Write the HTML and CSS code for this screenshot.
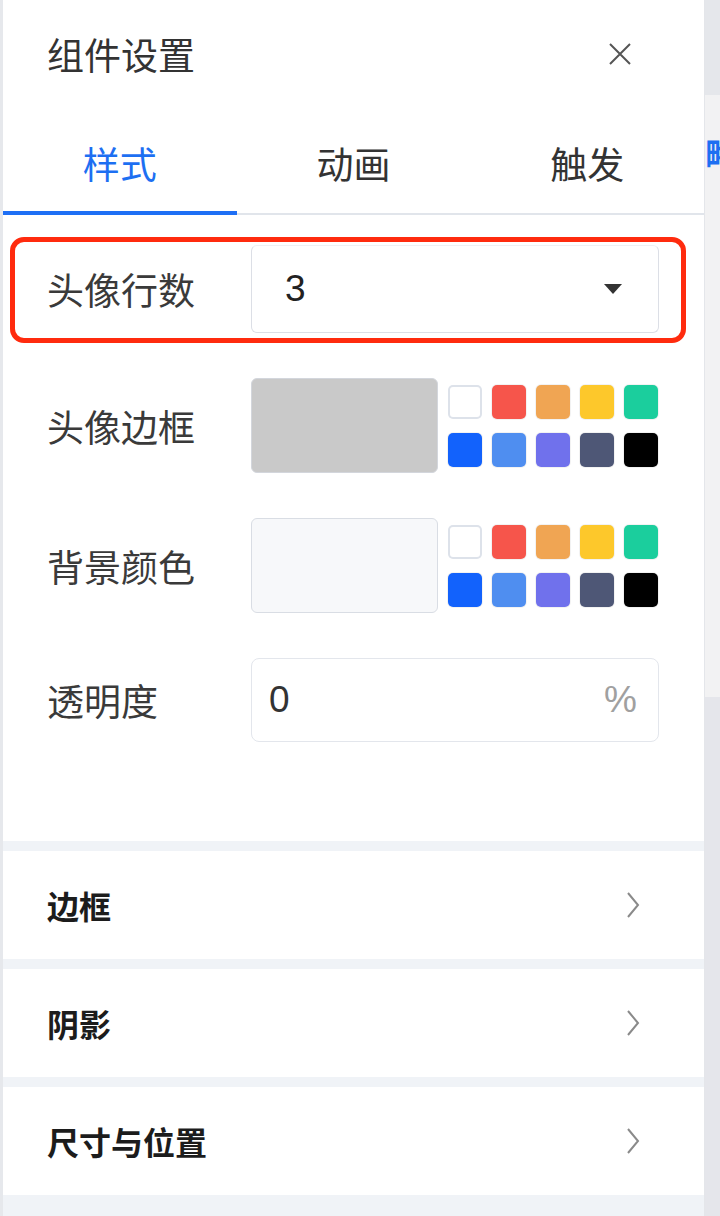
FILE: index.html
```html
<!DOCTYPE html>
<html lang="zh-CN">
<head>
    <meta charset="UTF-8">
    <meta name="viewport" content="width=device-width, initial-scale=1.0">
    <title>组件设置</title>
    <link rel="stylesheet" href="styles.css">
</head>
<body>
    <div class="edge-left"></div>

    <div class="panel">
        <div class="panel-header">
            <span class="panel-title">组件设置</span>
            <svg class="close-icon" width="24" height="24" viewBox="0 0 24 24">
                <path d="M2 2 L22 22 M22 2 L2 22" stroke="#555" stroke-width="2" fill="none"/>
            </svg>
        </div>

        <!-- tabs -->
        <div class="tabs">
            <div class="tab active">样式</div>
            <div class="tab">动画</div>
            <div class="tab">触发</div>
        </div>

        <div class="form">
            <div class="row row-highlight">
                <div class="row-label">头像行数</div>
                <div class="select">
                    <span class="select-value">3</span>
                    <span class="caret"></span>
                </div>
            </div>

            <div class="row">
                <div class="row-label">头像边框</div>
                <div class="color-preview preview-gray"></div>
                <div class="swatches">
                    <span class="swatch swatch-white"></span>
                    <span class="swatch" style="background:#f6554b"></span>
                    <span class="swatch" style="background:#f0a553"></span>
                    <span class="swatch" style="background:#fdc82b"></span>
                    <span class="swatch" style="background:#1bce9d"></span>
                    <span class="swatch" style="background:#1262fc"></span>
                    <span class="swatch" style="background:#4f8ef0"></span>
                    <span class="swatch" style="background:#7071ec"></span>
                    <span class="swatch" style="background:#4e5776"></span>
                    <span class="swatch" style="background:#000000"></span>
                </div>
            </div>

            <div class="row">
                <div class="row-label">背景颜色</div>
                <div class="color-preview preview-light"></div>
                <div class="swatches">
                    <span class="swatch swatch-white"></span>
                    <span class="swatch" style="background:#f6554b"></span>
                    <span class="swatch" style="background:#f0a553"></span>
                    <span class="swatch" style="background:#fdc82b"></span>
                    <span class="swatch" style="background:#1bce9d"></span>
                    <span class="swatch" style="background:#1262fc"></span>
                    <span class="swatch" style="background:#4f8ef0"></span>
                    <span class="swatch" style="background:#7071ec"></span>
                    <span class="swatch" style="background:#4e5776"></span>
                    <span class="swatch" style="background:#000000"></span>
                </div>
            </div>

            <div class="row">
                <div class="row-label">透明度</div>
                <div class="input-box">
                    <span class="input-value">0</span>
                    <span class="input-unit">%</span>
                </div>
            </div>
        </div>

        <div class="section">
            <span class="section-title">边框</span>
            <svg width="16" height="28" viewBox="0 0 16 28"><polyline points="3,2 13,14 3,26" stroke="#8a8a8a" stroke-width="2" fill="none"/></svg>
        </div>
        <div class="section">
            <span class="section-title">阴影</span>
            <svg width="16" height="28" viewBox="0 0 16 28"><polyline points="3,2 13,14 3,26" stroke="#8a8a8a" stroke-width="2" fill="none"/></svg>
        </div>
        <div class="section">
            <span class="section-title">尺寸与位置</span>
            <svg width="16" height="28" viewBox="0 0 16 28"><polyline points="3,2 13,14 3,26" stroke="#8a8a8a" stroke-width="2" fill="none"/></svg>
        </div>
    </div>

    <div class="edge-right">
        <div class="edge-top"></div>
        <div class="edge-mid"><span class="edge-text">略</span></div>
        <div class="edge-bottom"></div>
    </div>
</body>
</html>
```

FILE: styles.css
```css
body {
    font-family: "Liberation Sans", "Noto Sans CJK SC", sans-serif;
    margin: 0;
    padding: 0;
    height: 1216px;
    display: flex;
    overflow: hidden;
    background: #e5e6eb;
    color: #333;
}

.edge-left {
    width: 3px;
    background: #e6e8ec;
}

.panel {
    width: 701px;
    display: flex;
    flex-direction: column;
    background: #f0f3f7;
}

.panel-header {
    height: 108px;
    display: flex;
    align-items: center;
    justify-content: space-between;
    padding: 0 72px 2px 44px;
    background: #ffffff;
}

.panel-title {
    font-size: 37px;
    color: #333;
}

.tabs {
    display: flex;
    background: #ffffff;
    border-bottom: 2px solid #e1e5eb;
}

.tab {
    flex: 1;
    text-align: center;
    font-size: 37px;
    line-height: 44px;
    padding: 35px 0 22px;
    border-bottom: 4px solid transparent;
    margin-bottom: -2px;
    color: #333;
}

.tab.active {
    color: #1d6ff2;
    border-bottom-color: #1e6ff5;
}

.form {
    display: flex;
    flex-direction: column;
    gap: 45px;
    padding: 30px 45px 99px 44px;
    background: #ffffff;
}

.row {
    display: flex;
    align-items: center;
}

.row-highlight {
    position: relative;
}

/* red annotation frame drawn over the first row */
.row-highlight::after {
    content: "";
    position: absolute;
    top: -8px;
    left: -37px;
    right: -27px;
    bottom: -10px;
    border: 5px solid #ff2b0e;
    border-radius: 14px;
    pointer-events: none;
}

.row-label {
    flex: 0 0 204px;
    font-size: 37px;
    color: #3a3a3a;
}

.select {
    flex: 1;
    height: 88px;
    box-sizing: border-box;
    border: 1px solid #dcdfe6;
    border-top-color: #eef0f3;
    border-radius: 6px;
    display: flex;
    align-items: center;
    justify-content: space-between;
    padding: 0 36px 0 33px;
}

.select-value {
    font-size: 37px;
    color: #222;
}

.caret {
    width: 0;
    height: 0;
    border-left: 9px solid transparent;
    border-right: 9px solid transparent;
    border-top: 10px solid #333;
}

.color-preview {
    width: 187px;
    height: 95px;
    box-sizing: border-box;
    border-radius: 6px;
}

.preview-gray {
    background: #c9c9c9;
    border: 1px solid #d3d6dc;
}

.preview-light {
    background: #f7f8fa;
    border: 1px solid #d9dde4;
}

.swatches {
    display: grid;
    grid-template-columns: repeat(5, 34px);
    grid-auto-rows: 34px;
    gap: 14px 10px;
    margin-left: 10px;
}

.swatch {
    border-radius: 5px;
    box-shadow: 0 0 0 1px rgba(0, 0, 0, 0.05);
}

.swatch-white {
    background: #ffffff;
    box-shadow: inset 0 0 0 2px #dde2ea;
}

.input-box {
    flex: 1;
    height: 84px;
    box-sizing: border-box;
    border: 1px solid #e3e6ec;
    border-radius: 8px;
    display: flex;
    align-items: center;
    justify-content: space-between;
    padding: 0 21px 0 17px;
}

.input-value {
    font-size: 37px;
    color: #333;
}

.input-unit {
    font-size: 37px;
    color: #a0a0a0;
}

.section {
    height: 108px;
    margin-top: 10px;
    display: flex;
    align-items: center;
    justify-content: space-between;
    padding: 0 63px 0 44px;
    background: #ffffff;
}

.section-title {
    font-size: 32px;
    font-weight: bold;
    color: #1c1c1c;
}

.edge-right {
    width: 16px;
    display: flex;
    flex-direction: column;
    overflow: hidden;
    border-left: 1px solid #e4e6ea;
    box-sizing: border-box;
}

.edge-top {
    height: 95px;
    background: #e5e7eb;
}

.edge-mid {
    height: 602px;
    background: #f2f2f3;
    white-space: nowrap;
    padding-top: 34px;
    box-sizing: border-box;
}

.edge-text {
    font-size: 34px;
    font-weight: bold;
    color: #1d6ff2;
}

.edge-bottom {
    flex: 1;
    background: #e5e6eb;
}
```
